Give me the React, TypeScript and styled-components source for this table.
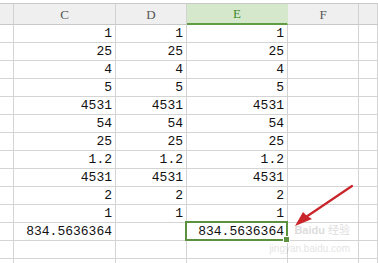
import styled, { createGlobalStyle } from "styled-components";

const GlobalStyle = createGlobalStyle`
  html, body {
    margin: 0;
    padding: 0;
    background: #ffffff;
    overflow: hidden;
  }
`;

const COLS = ["B", "C", "D", "E", "F", "G"];
const WIDTHS = "14px 102px 71px 101px 71px 1fr";

const ROWS: (string | null)[][] = [
  ["1", "1", "1"],
  ["25", "25", "25"],
  ["4", "4", "4"],
  ["5", "5", "5"],
  ["4531", "4531", "4531"],
  ["54", "54", "54"],
  ["25", "25", "25"],
  ["1.2", "1.2", "1.2"],
  ["4531", "4531", "4531"],
  ["2", "2", "2"],
  ["1", "1", "1"],
  ["834.5636364", null, "834.5636364"],
  [null, null, null],
  [null, null, null],
];

export default function App() {
  return (
    <>
      <GlobalStyle />
      <Sheet>
        <FormulaStrip />
        <Grid>
          {COLS.map((c) => (
            <HeadCell key={c} $active={c === "E"}>
              {c === "B" || c === "G" ? "" : c}
            </HeadCell>
          ))}
          {ROWS.map((row, r) => (
            <Row key={r} row={row} selected={r === 11} />
          ))}
        </Grid>
        <Watermark>
          <WmLogo>
            Baidu <WmCn>经验</WmCn>
          </WmLogo>
          <WmUrl>jingyan.baidu.com</WmUrl>
        </Watermark>
        <Arrow width="80" height="60" viewBox="0 0 80 60">
          <line x1="65" y1="2" x2="19" y2="33" stroke="#c9252a" strokeWidth="2.2" strokeLinecap="round" />
          <path d="M8 42 L16 28 L20 32 L25 35 Z" fill="#c9252a" />
        </Arrow>
      </Sheet>
    </>
  );
}

const Row = ({ row, selected }: { row: (string | null)[]; selected: boolean }) => (
  <>
    <Cell />
    <Cell>{row[0]}</Cell>
    <Cell>{row[1]}</Cell>
    <Cell $selected={selected}>
      {row[2]}
      {selected && <Handle />}
    </Cell>
    <Cell />
    <Cell />
  </>
);

const Sheet = styled.div`
  position: relative;
  width: 378px;
  height: 263px;
  overflow: hidden;
  background: #ffffff;
  font-family: "Liberation Mono", "Noto Sans CJK SC", monospace;
`;

const FormulaStrip = styled.div`
  height: 3px;
  background: #ffffff;
  border-bottom: 1px solid #c9c9c9;
`;

const Grid = styled.div`
  display: grid;
  grid-template-columns: ${WIDTHS};
  grid-auto-rows: 18px;
  grid-template-rows: 21px;
`;

const HeadCell = styled.div<{ $active?: boolean }>`
  box-sizing: border-box;
  display: flex;
  align-items: center;
  justify-content: center;
  background: ${(p) => (p.$active ? "#d6e8cc" : "#efefef")};
  border-right: 1px solid ${(p) => (p.$active ? "#d6e8cc" : "#d2d2d2")};
  border-bottom: ${(p) => (p.$active ? "2px solid #5f9c45" : "1px solid #c8c8c8")};
  color: ${(p) => (p.$active ? "#3f8a2c" : "#555555")};
  font-family: "Liberation Serif", serif;
  font-size: 13px;
  padding-top: 1px;
`;

const Cell = styled.div<{ $selected?: boolean }>`
  position: relative;
  box-sizing: border-box;
  display: flex;
  align-items: center;
  justify-content: flex-end;
  padding-right: 3px;
  border-right: 1px solid #d4d4d4;
  border-bottom: 1px solid #d4d4d4;
  color: #111111;
  font-size: 13px;
  white-space: nowrap;

  ${(p) =>
    p.$selected &&
    `
    &::after {
      content: "";
      position: absolute;
      top: -2px;
      left: -2px;
      right: -1px;
      bottom: -1px;
      border: 2px solid #5c9140;
    }
  `}
`;

const Handle = styled.span`
  position: absolute;
  right: -3px;
  bottom: -3px;
  width: 5px;
  height: 5px;
  background: #5c9140;
  border: 1px solid #ffffff;
  z-index: 2;
`;

const Watermark = styled.div`
  position: absolute;
  right: 28px;
  top: 224px;
  display: flex;
  flex-direction: column;
  align-items: flex-end;
  gap: 6px;
  color: #777777;
  font-family: "Liberation Sans", "Noto Sans CJK SC", sans-serif;
  pointer-events: none;
`;

const WmLogo = styled.div`
  opacity: 0.25;
  font-size: 11px;
  font-weight: bold;
  line-height: 13px;
`;

const WmCn = styled.span`
  font-weight: normal;
`;

const WmUrl = styled.div`
  opacity: 0.2;
  font-size: 10px;
  line-height: 12px;
`;

const Arrow = styled.svg`
  position: absolute;
  left: 287px;
  top: 184px;
  overflow: visible;
`;
